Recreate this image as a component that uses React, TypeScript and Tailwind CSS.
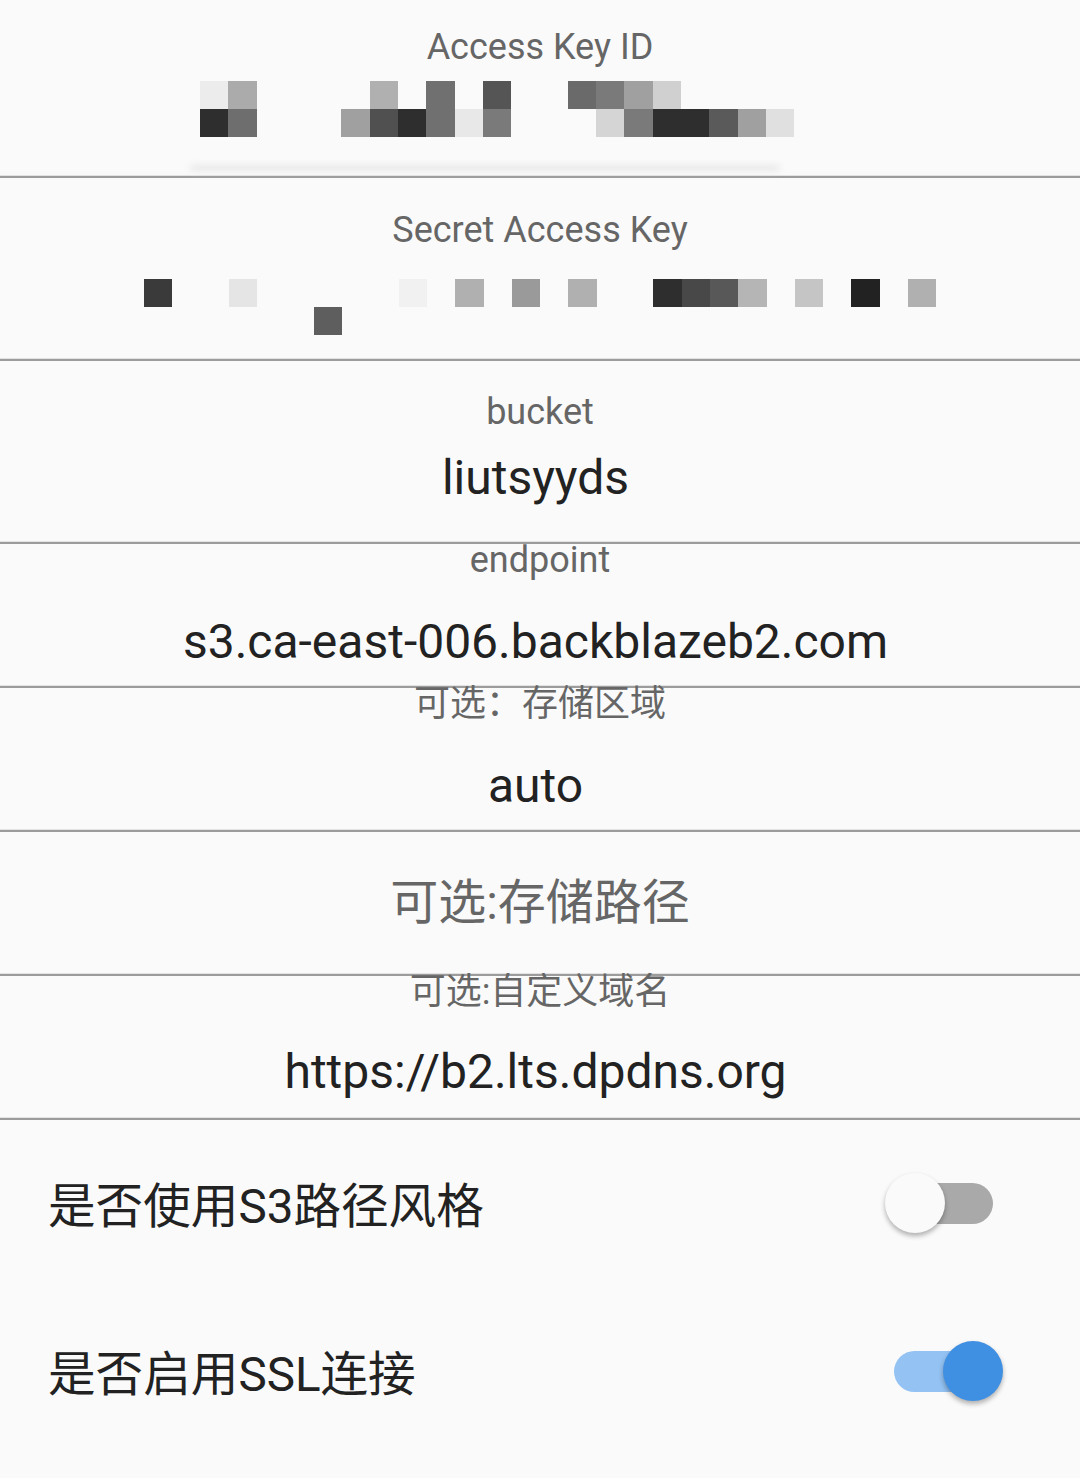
import React from "react";

type Cell = string | null;

const keyIdRows: Cell[][] = [
  [
    "#ececec", "#ababab", null, null, null, null, "#b0b0b0", null, "#707070", null,
    "#555555", null, null, "#6a6a6a", "#7a7a7a", "#a0a0a0", "#d0d0d0", null, null, null, null,
  ],
  [
    "#2e2e2e", "#6e6e6e", null, null, null, "#a0a0a0", "#505050", "#2e2e2e", "#707070", "#e8e8e8",
    "#7a7a7a", null, null, null, "#d5d5d5", "#7a7a7a", "#2e2e2e", "#2e2e2e", "#5a5a5a", "#a0a0a0", "#e0e0e0",
  ],
];

const secretRows: Cell[][] = [
  [
    "#3a3a3a", null, null, "#e5e5e5", null, null, null, null, null, "#f1f1f1",
    null, "#b0b0b0", null, "#9a9a9a", null, "#b0b0b0", null, null, "#2e2e2e", "#484848",
    "#585858", "#b5b5b5", null, "#c5c5c5", null, "#222222", null, "#b0b0b0",
  ],
  [
    null, null, null, null, null, null, "#5e5e5e", null, null, null,
    null, null, null, null, null, null, null, null, null, null,
    null, null, null, null, null, null, null, null,
  ],
];

// blurred value, drawn as a grid of grey cells
function Mosaic({ rows, left }: { rows: Cell[][]; left: string }) {
  return (
    <div className={`flex flex-col ${left}`}>
      {rows.map((row, r) => (
        <div key={r} className="flex h-[28px]">
          {row.map((c, i) => (
            <div key={i} className="w-[28.3px] h-[28px]" style={{ backgroundColor: c ?? "transparent" }} />
          ))}
        </div>
      ))}
    </div>
  );
}

function Divider() {
  return (
    <div className="h-[3px] flex flex-col">
      <div className="h-[1px] bg-[#e2e2e2]" />
      <div className="h-[2px] bg-[#9c9c9c]" />
    </div>
  );
}

function Label({ children }: { children: React.ReactNode }) {
  return <div className="text-center text-[36px] leading-[44px] text-[#666666]">{children}</div>;
}

function Value({ children }: { children: React.ReactNode }) {
  return <div className="pr-[9px] text-center text-[48px] leading-[58px] text-[#222222]">{children}</div>;
}

function Toggle({ on }: { on: boolean }) {
  return (
    <div className={`relative mb-[9px] w-[100px] h-[41px] rounded-full ${on ? "bg-[#93c2f3]" : "bg-[#a9a9a9]"}`}>
      <div
        className={`absolute top-[-10px] w-[60px] h-[60px] rounded-full shadow-[0_3px_5px_rgba(0,0,0,0.3)] ${
          on ? "right-[-9px] bg-[#3f8fe3]" : "left-[-8px] bg-[#fafafa]"
        }`}
      />
    </div>
  );
}

export default function App() {
  return (
    <div
      className="w-[1080px] h-[1478px] bg-[#fafafa] overflow-hidden"
      style={{ fontFamily: "Roboto, 'Noto Sans CJK SC', sans-serif" }}
    >
      {/* Access Key ID */}
      <div className="h-[175px] pt-[25px] flex flex-col">
        <Label>Access Key ID</Label>
        <div className="mt-[12px]">
          <Mosaic rows={keyIdRows} left="pl-[200px]" />
        </div>
        <div className="mt-[28px] ml-[190px] w-[590px] h-[6px] rounded-full bg-[#e8e8e8] blur-[3px]" />
      </div>
      <Divider />

      {/* Secret Access Key */}
      <div className="h-[180px] pt-[30px] flex flex-col">
        <Label>Secret Access Key</Label>
        <div className="mt-[27px]">
          <Mosaic rows={secretRows} left="pl-[144px]" />
        </div>
      </div>
      <Divider />

      {/* bucket */}
      <div className="h-[180px] pt-[29px] flex flex-col">
        <Label>bucket</Label>
        <div className="mt-[15px]">
          <Value>liutsyyds</Value>
        </div>
      </div>
      <Divider />

      {/* endpoint */}
      <div className="h-[141px] flex flex-col">
        <div className="-mt-[6px]">
          <Label>endpoint</Label>
        </div>
        <div className="mt-[31px]">
          <Value>s3.ca-east-006.backblazeb2.com</Value>
        </div>
      </div>
      <Divider />

      {/* region */}
      <div className="h-[141px] flex flex-col">
        <div className="-mt-[6px]">
          <Label>可选：存储区域</Label>
        </div>
        <div className="mt-[31px]">
          <Value>auto</Value>
        </div>
      </div>
      <Divider />

      {/* path */}
      <div className="h-[141px] flex items-center justify-center">
        <div className="text-[48px] leading-[58px] text-[#666666]">可选:存储路径</div>
      </div>
      <Divider />

      {/* custom domain */}
      <div className="h-[141px] flex flex-col">
        <div className="-mt-[6px]">
          <Label>可选:自定义域名</Label>
        </div>
        <div className="mt-[29px]">
          <Value>https://b2.lts.dpdns.org</Value>
        </div>
      </div>
      <Divider />

      {/* switches */}
      <div className="flex flex-col pt-[30px]">
        <div className="h-[116px] flex items-center justify-between pl-[48px] pr-[87px]">
          <span className="text-[47.6px] text-[#222222]">是否使用S3路径风格</span>
          <Toggle on={false} />
        </div>
        <div className="h-[52px]" />
        <div className="h-[116px] flex items-center justify-between pl-[48px] pr-[86px]">
          <span className="text-[47.6px] text-[#222222]">是否启用SSL连接</span>
          <Toggle on={true} />
        </div>
      </div>
    </div>
  );
}
